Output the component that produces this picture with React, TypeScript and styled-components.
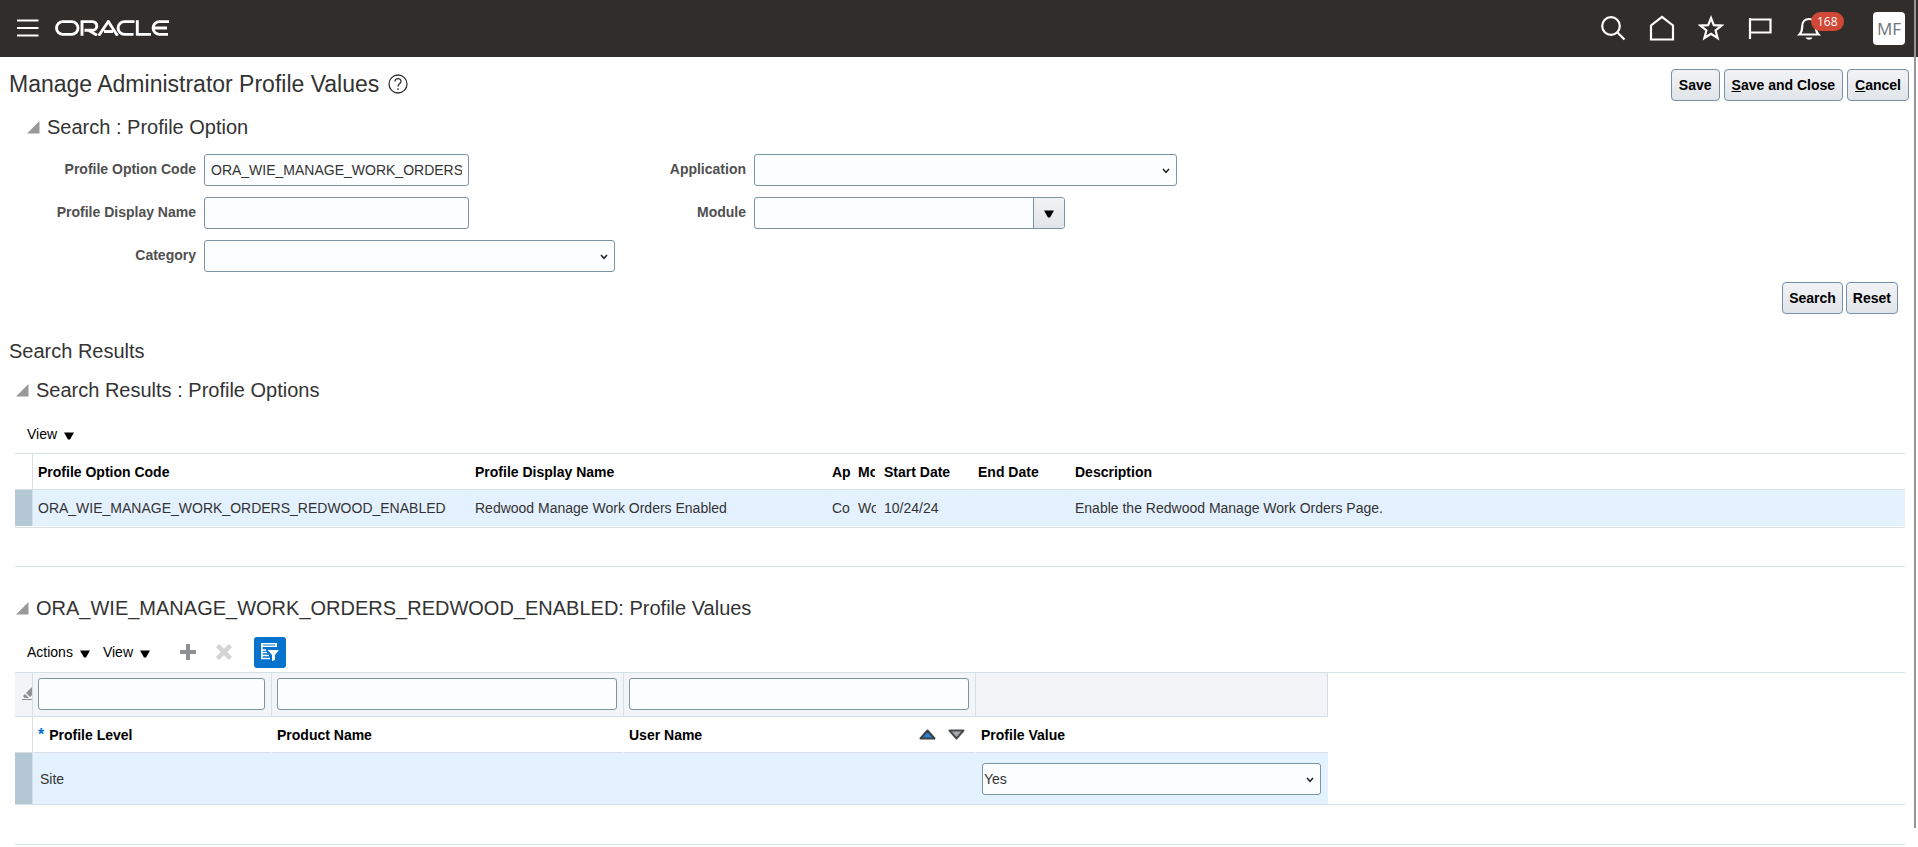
import React from "react";
import styled, { createGlobalStyle, css } from "styled-components";

const Global = createGlobalStyle`
  * { box-sizing: border-box; }
  body {
    margin: 0;
    background: #fff;
    color: #333;
    font: 14px/20px "Liberation Sans", Arial, sans-serif;
  }
  button, input, select { font: inherit; }
`;

const line = "#d6dfe6";
const fieldBorder = "#7d95a3";

const ScrollThumb = styled.div`
  position: fixed;
  top: 0;
  right: 2px;
  bottom: 19px;
  width: 2px;
  background: #969696;
`;

const Header = styled.header`
  display: flex;
  align-items: center;
  justify-content: space-between;
  height: 57px;
  padding: 0 13px 1px 14px;
  background: #312d2a;
`;

const HeaderGroup = styled.div<{ $gap: number }>`
  display: flex;
  align-items: center;
  gap: ${(p) => p.$gap}px;
`;

const IconButton = styled.button`
  display: flex;
  padding: 0;
  border: 0;
  background: none;
  position: relative;
`;

const BellSlot = styled.div`
  padding-right: 28px;
`;

const Badge = styled.span`
  position: absolute;
  left: 15px;
  top: -3px;
  padding: 0 6px;
  border-radius: 10px;
  background: #d14836;
  color: #fff;
  font: 12px/19px "Open Sans", sans-serif;
`;

const Avatar = styled.button`
  width: 32px;
  height: 33px;
  padding: 0;
  border: 0;
  border-radius: 4px;
  background: #fff;
  color: #6f747c;
  font: 17px/33px "Open Sans", sans-serif;
`;

const TitleBar = styled.div`
  display: flex;
  align-items: flex-start;
  justify-content: space-between;
  padding: 12px 9px 0;
`;

const Title = styled.h1`
  display: flex;
  align-items: center;
  gap: 9px;
  margin: 0;
  font-size: 23px;
  line-height: 30px;
  font-weight: 400;
`;

const ButtonRow = styled.div<{ $gap: number }>`
  display: flex;
  justify-content: flex-end;
  gap: ${(p) => p.$gap}px;
`;

const PushButton = styled.button<{ $pad?: number }>`
  height: 32px;
  padding: 0 ${(p) => p.$pad || 6}px;
  border: 1px solid #7590a8;
  border-radius: 4px;
  background: linear-gradient(#f1f2f4, #e1e5e9);
  color: #000;
  font-weight: 700;
  white-space: nowrap;
`;

const SectionHead = styled.h2<{ $indent: number; $top: number }>`
  display: flex;
  align-items: center;
  gap: 7px;
  margin: ${(p) => p.$top}px 0 0 ${(p) => p.$indent}px;
  font-size: 20px;
  line-height: 24px;
  font-weight: 400;
`;

const SearchForm = styled.form`
  padding: 15px 20px 0 28px;
`;

const Columns = styled.div`
  display: grid;
  grid-template-columns: 607px 1fr;
  column-gap: 0;
`;

const FieldColumn = styled.div<{ $label: number }>`
  display: grid;
  grid-template-columns: ${(p) => p.$label}px auto;
  grid-auto-rows: 32px;
  gap: 11px 8px;
  align-content: start;
  justify-items: start;
`;

const Label = styled.label`
  justify-self: end;
  color: #4f4f4f;
  font-weight: 700;
  line-height: 30px;
`;

const fieldLook = css`
  height: 32px;
  border: 1px solid ${fieldBorder};
  border-radius: 3px;
  background: #fcfdfe;
  color: #333;
`;

const TextInput = styled.input<{ $w?: number }>`
  ${fieldLook}
  display: block;
  width: ${(p) => (p.$w ? p.$w + "px" : "100%")};
  padding: 0 6px;
`;

const SelectWrap = styled.div<{ $w: number }>`
  position: relative;
  width: ${(p) => p.$w}px;
  > svg {
    position: absolute;
    right: 7px;
    top: 14px;
    pointer-events: none;
  }
`;

const NativeSelect = styled.select`
  ${fieldLook}
  display: block;
  width: 100%;
  padding: 0 1px;
  appearance: none;
`;

const Combo = styled.div`
  display: flex;
  ${fieldLook}
  width: 311px;
  overflow: hidden;
`;

const ComboInput = styled.input`
  flex: 1;
  min-width: 0;
  border: 0;
  background: none;
`;

const ComboButton = styled.button`
  display: flex;
  align-items: center;
  justify-content: center;
  width: 31px;
  padding: 2px 0 0;
  border: 0;
  border-left: 1px solid #7590a8;
  background: linear-gradient(#f1f2f4, #e1e5e9);
`;

const SearchActions = styled.div`
  margin-top: 10px;
`;

const ResultsTitle = styled.h2`
  margin: 25px 0 0 9px;
  font-size: 20px;
  line-height: 24px;
  font-weight: 400;
`;

const Panel = styled.section`
  margin: 0 13px 0 15px;
  border-bottom: 1px solid ${line};
`;

const Toolbar = styled.div<{ $top: number; $bottom: number }>`
  display: flex;
  align-items: center;
  height: 32px;
  margin: ${(p) => p.$top}px 0 ${(p) => p.$bottom}px;
  padding-left: 12px;
`;

const MenuButton = styled.button`
  display: flex;
  align-items: center;
  gap: 7px;
  margin-right: 13px;
  padding: 0;
  border: 0;
  background: none;
  color: #000;
  > svg { margin-top: 3px; }
`;

const ToolIcons = styled.div`
  display: flex;
  align-items: center;
  gap: 20px;
  margin-left: 17px;
`;

const FilterToggle = styled.button`
  display: flex;
  align-items: center;
  justify-content: center;
  width: 32px;
  height: 31px;
  margin-left: 2px;
  padding: 0;
  border: 0;
  border-radius: 3px;
  background: #0572ce;
`;

const TableFrame = styled.div<{ $after: number; $inner?: number }>`
  border-top: 1px solid ${line};
  border-bottom: 1px solid ${line};
  padding-bottom: ${(p) => p.$inner || 0}px;
  margin-bottom: ${(p) => p.$after}px;
`;

const Table = styled.table<{ $w?: number }>`
  width: ${(p) => (p.$w ? p.$w + "px" : "100%")};
  table-layout: fixed;
  border-collapse: separate;
  border-spacing: 0;
`;

const Th = styled.th`
  height: 36px;
  padding: 0 0 0 5px;
  border-bottom: 1px solid ${line};
  border-right: 1px solid #fff;
  color: #000;
  font-weight: 700;
  text-align: left;
  white-space: nowrap;
  overflow: hidden;
  &:last-child { border-right: 0; }
`;

const Td = styled.td<{ $h: number; $pad?: number }>`
  height: ${(p) => p.$h}px;
  padding: 0 0 0 ${(p) => p.$pad || 5}px;
  background: #e4f1fe;
  white-space: nowrap;
  overflow: hidden;
`;

const Clipped = styled.div`
  margin-right: 3px;
  overflow: hidden;
`;

const HandleCell = styled.td<{ $fill?: string }>`
  padding: 0;
  border-right: 1px solid ${line};
  background: ${(p) => p.$fill || "#fff"};
`;

const HandleHead = styled.td`
  padding: 0;
  border-right: 1px solid ${line};
  border-bottom: 1px solid ${line};
`;

const FilterCell = styled.td`
  height: 44px;
  padding: 0 6px 1px 5px;
  border-right: 1px solid ${line};
  border-bottom: 1px solid ${line};
  background: #f2f4f8;
`;

const EraserCell = styled(FilterCell)`
  padding: 2px 0 0 7px;
  overflow: hidden;
`;

const Required = styled.span`
  margin-right: 5px;
  color: #0572ce;
  font-size: 16px;
`;

const SortHead = styled.div`
  display: flex;
  align-items: center;
  justify-content: space-between;
`;

const SortIcons = styled.span`
  display: flex;
  gap: 12px;
  padding-right: 10px;
`;

const Disclosure = () => (
  <svg width="13" height="13" viewBox="0 0 13 13" aria-hidden="true">
    <path d="M12.500 0V12.500H0Z" fill="#999" />
  </svg>
);

const Caret = () => (
  <svg width="10" height="8" viewBox="0 0 10 8" aria-hidden="true">
    <path d="M0 0.500H10L6 7.500H4Z" fill="#000" />
  </svg>
);

const Chevron = () => (
  <svg width="8" height="6" viewBox="0 0 8 6" aria-hidden="true">
    <path d="M1 1L4 4.300L7 1" fill="none" stroke="#222" strokeWidth="1.500" />
  </svg>
);

const Logo = () => (
  <svg width="115" height="16" viewBox="0 0 115 16" fill="none" stroke="#fff" strokeWidth="2.900" role="img" aria-label="Oracle">
    <rect x="1.500" y="1.600" width="21.500" height="12.800" rx="6.400" />
    <path d="M27 15.700V1.600H37.500A4.300 4.300 0 0 1 37.500 10.200H29.500M33.500 10.200L42 15.200" />
    <path d="M43.700 15.700L53.300 1.500L62.500 15.700M49 11.500H58" />
    <path d="M79.500 1.600H69.500A6.400 6.400 0 0 0 69.500 14.400H78.500" />
    <path d="M82.300 0.300V14.400H96" />
    <path d="M114 1.600H104.500A6.400 6.400 0 0 0 104.500 14.400H113M98.500 8H112" />
  </svg>
);

const icon = { width: 26, height: 26, viewBox: "0 0 26 26", fill: "none", stroke: "#fff", strokeWidth: 2.2, "aria-hidden": true } as const;

function Dropdown({ id, width, label, value = "" }: { id?: string; width: number; label?: string; value?: string }) {
  return (
    <SelectWrap $w={width}>
      <NativeSelect id={id} aria-label={label} defaultValue={value}>
        <option value={value}>{value}</option>
      </NativeSelect>
      <Chevron />
    </SelectWrap>
  );
}

export default function App() {
  return (
    <>
      <Global />
      <Header>
        <HeaderGroup $gap={14}>
          <IconButton aria-label="Navigator">
            <svg {...icon} width="27" viewBox="0 0 27 26">
              <path d="M3 5.500H24.500M3 13H24.500M3 20.500H24.500" />
            </svg>
          </IconButton>
          <Logo />
        </HeaderGroup>
        <HeaderGroup $gap={23}>
          <IconButton aria-label="Search">
            <svg {...icon}>
              <circle cx="11" cy="11" r="8.800" />
              <path d="M17.200 17.200L24.500 24.500" />
            </svg>
          </IconButton>
          <IconButton aria-label="Home">
            <svg {...icon}>
              <path d="M2 24.500V10.500L13 2L24 10.500V24.500Z" />
            </svg>
          </IconButton>
          <IconButton aria-label="Favorites">
            <svg {...icon}>
              <path d="M13 3L15.800 10.200L23.600 10.600L17.600 15.500L19.600 23L13 18.800L6.400 23L8.400 15.500L2.400 10.600L10.200 10.200Z" />
            </svg>
          </IconButton>
          <IconButton aria-label="Watchlist">
            <svg {...icon}>
              <path d="M3 3V24M3 4.500H23.500V17.500H3" />
            </svg>
          </IconButton>
          <BellSlot>
            <IconButton aria-label="Notifications, 168">
              <svg {...icon}>
                <path d="M3.500 19.500H22.500C20.500 17.500 19.800 15.500 19.800 11.500C19.800 7 17 4 13 4S6.200 7 6.200 11.500C6.200 15.500 5.500 17.500 3.500 19.500Z" />
                <path d="M9.500 22.500A3.600 2.800 0 0 0 16.500 22.500Z" fill="#fff" stroke="none" />
              </svg>
              <Badge>168</Badge>
            </IconButton>
          </BellSlot>
          <Avatar>MF</Avatar>
        </HeaderGroup>
      </Header>

      <main>
        <TitleBar>
          <Title>
            Manage Administrator Profile Values
            <IconButton aria-label="Help">
              <svg width="20" height="20" viewBox="0 0 20 20" fill="none" stroke="#333" strokeWidth="1.300" aria-hidden="true">
                <circle cx="10" cy="10" r="9" />
                <path d="M7 7.500C7 3.800 13 3.800 13 7.300C13 9.800 10 9.800 10 12.500M10 14.300V16" />
              </svg>
            </IconButton>
          </Title>
          <ButtonRow $gap={4}>
            <PushButton $pad={7}>Save</PushButton>
            <PushButton $pad={7}><u>S</u>ave and Close</PushButton>
            <PushButton $pad={7}><u>C</u>ancel</PushButton>
          </ButtonRow>
        </TitleBar>

        <SectionHead $indent={27} $top={14}>
          <Disclosure />
          Search : Profile Option
        </SectionHead>
        <SearchForm onSubmit={(e) => e.preventDefault()}>
          <Columns>
            <FieldColumn $label={168}>
              <Label htmlFor="code">Profile Option Code</Label>
              <TextInput id="code" $w={265} defaultValue="ORA_WIE_MANAGE_WORK_ORDERS_REDWOOD_ENABLED" />
              <Label htmlFor="display">Profile Display Name</Label>
              <TextInput id="display" $w={265} />
              <Label htmlFor="category">Category</Label>
              <Dropdown id="category" width={411} />
            </FieldColumn>
            <FieldColumn $label={111}>
              <Label htmlFor="application">Application</Label>
              <Dropdown id="application" width={423} />
              <Label htmlFor="module">Module</Label>
              <Combo>
                <ComboInput id="module" />
                <ComboButton type="button" aria-label="Search: Module"><Caret /></ComboButton>
              </Combo>
            </FieldColumn>
          </Columns>
          <SearchActions>
            <ButtonRow $gap={3}>
              <PushButton>Search</PushButton>
              <PushButton type="button">Reset</PushButton>
            </ButtonRow>
          </SearchActions>
        </SearchForm>

        <ResultsTitle>Search Results</ResultsTitle>

        <Panel>
          <SectionHead $indent={1} $top={15}>
            <Disclosure />
            Search Results : Profile Options
          </SectionHead>
          <Toolbar $top={16} $bottom={3}>
            <MenuButton>View <Caret /></MenuButton>
          </Toolbar>
          <TableFrame $after={38} $inner={1}>
            <Table>
              <colgroup>
                <col style={{ width: 18 }} />
                <col style={{ width: 437 }} />
                <col style={{ width: 357 }} />
                <col style={{ width: 26 }} />
                <col style={{ width: 26 }} />
                <col style={{ width: 94 }} />
                <col style={{ width: 97 }} />
                <col />
              </colgroup>
              <thead>
                <tr>
                  <HandleHead />
                  <Th>Profile Option Code</Th>
                  <Th>Profile Display Name</Th>
                  <Th>Ap</Th>
                  <Th><Clipped>Mo</Clipped></Th>
                  <Th>Start Date</Th>
                  <Th>End Date</Th>
                  <Th>Description</Th>
                </tr>
              </thead>
              <tbody>
                <tr>
                  <HandleCell $fill="#b4c7d5" />
                  <Td $h={36}>ORA_WIE_MANAGE_WORK_ORDERS_REDWOOD_ENABLED</Td>
                  <Td $h={36}>Redwood Manage Work Orders Enabled</Td>
                  <Td $h={36}>Co</Td>
                  <Td $h={36}><Clipped>Wo</Clipped></Td>
                  <Td $h={36}>10/24/24</Td>
                  <Td $h={36} />
                  <Td $h={36}>Enable the Redwood Manage Work Orders Page.</Td>
                </tr>
              </tbody>
            </Table>
          </TableFrame>
        </Panel>

        <Panel>
          <SectionHead $indent={1} $top={29}>
            <Disclosure />
            ORA_WIE_MANAGE_WORK_ORDERS_REDWOOD_ENABLED: Profile Values
          </SectionHead>
          <Toolbar $top={16} $bottom={4}>
            <MenuButton>Actions <Caret /></MenuButton>
            <MenuButton>View <Caret /></MenuButton>
            <ToolIcons>
              <IconButton aria-label="New">
                <svg width="16" height="16" viewBox="0 0 16 16" fill="none" stroke="#8e9194" strokeWidth="4" aria-hidden="true">
                  <path d="M8 0V16M0 8H16" />
                </svg>
              </IconButton>
              <IconButton aria-label="Delete">
                <svg width="16" height="16" viewBox="0 0 16 16" fill="none" stroke="#d2d4d6" strokeWidth="4.500" aria-hidden="true">
                  <path d="M1.500 1.500L14.500 14.500M14.500 1.500L1.500 14.500" />
                </svg>
              </IconButton>
              <FilterToggle aria-label="Query By Example" aria-pressed="true">
                <svg width="18" height="18" viewBox="0 0 18 18" aria-hidden="true">
                  <path d="M0 0H16V4H0Z" fill="#fff" />
                  <path d="M2 2H14" stroke="#0572ce" strokeWidth="1" />
                  <path d="M0.900 3V15.500H9M1 7H5M1 9.500H6M1 12.500H8" fill="none" stroke="#fff" strokeWidth="1.600" />
                  <path d="M6.500 7H18L14 12V17L11 18V12Z" fill="#fff" />
                </svg>
              </FilterToggle>
            </ToolIcons>
          </Toolbar>
          <TableFrame $after={39}>
            <Table $w={1313}>
              <colgroup>
                <col style={{ width: 18 }} />
                <col style={{ width: 239 }} />
                <col style={{ width: 352 }} />
                <col style={{ width: 352 }} />
                <col style={{ width: 352 }} />
              </colgroup>
              <thead>
                <tr>
                  <EraserCell>
                    <svg width="17" height="15" viewBox="0 0 17 15" aria-hidden="true">
                      <path d="M0 13.500H17" stroke="#8e9194" />
                      <path d="M4 7L11 0L16 3L8 11Z" fill="#8e9194" />
                      <path d="M3 8L7 12H2.500L1 10Z" fill="#8e9194" />
                    </svg>
                  </EraserCell>
                  <FilterCell><TextInput aria-label="Filter Profile Level" /></FilterCell>
                  <FilterCell><TextInput aria-label="Filter Product Name" /></FilterCell>
                  <FilterCell><TextInput aria-label="Filter User Name" /></FilterCell>
                  <FilterCell />
                </tr>
                <tr>
                  <HandleHead />
                  <Th><Required>*</Required>Profile Level</Th>
                  <Th>Product Name</Th>
                  <Th>
                    <SortHead>
                      User Name
                      <SortIcons>
                        <IconButton aria-label="Sort Ascending">
                          <svg width="17" height="12" viewBox="0 0 17 12" aria-hidden="true">
                            <path d="M8.500 1.500L15.500 9.500H1.500Z" fill="#2b7fd0" stroke="#3d4146" strokeWidth="2" strokeLinejoin="round" />
                          </svg>
                        </IconButton>
                        <IconButton aria-label="Sort Descending">
                          <svg width="17" height="12" viewBox="0 0 17 12" aria-hidden="true">
                            <path d="M8.500 9.500L1.500 1.500H15.500Z" fill="#aaa" stroke="#4a4d50" strokeWidth="2" strokeLinejoin="round" />
                          </svg>
                        </IconButton>
                      </SortIcons>
                    </SortHead>
                  </Th>
                  <Th>Profile Value</Th>
                </tr>
              </thead>
              <tbody>
                <tr>
                  <HandleCell $fill="#b4c7d5" />
                  <Td $h={51} $pad={7}>Site</Td>
                  <Td $h={51} />
                  <Td $h={51} />
                  <Td $h={51} $pad={6}><Dropdown width={339} label="Profile Value" value="Yes" /></Td>
                </tr>
              </tbody>
            </Table>
          </TableFrame>
        </Panel>
      </main>
      <ScrollThumb />
    </>
  );
}
